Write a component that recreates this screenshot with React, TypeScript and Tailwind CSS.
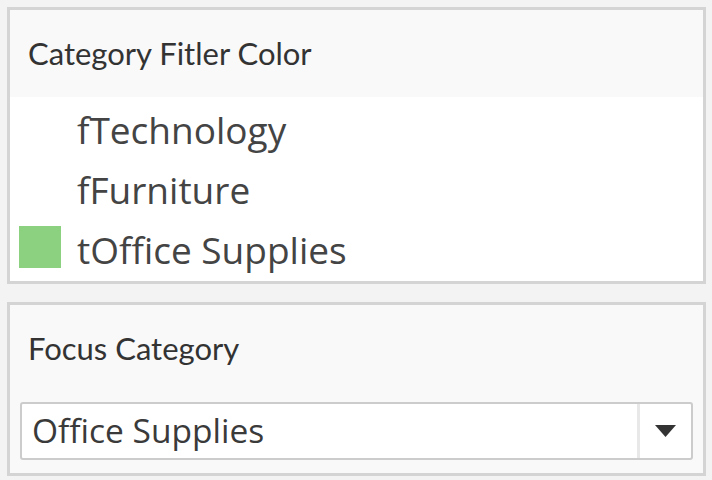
import React from 'react';

const items = [
  { label: 'fTechnology', on: false },
  { label: 'fFurniture', on: false },
  { label: 'tOffice Supplies', on: true },
];

const title = { fontFamily: 'Lato, "Open Sans", sans-serif' };
const body = { fontFamily: '"Open Sans", "Noto Sans", sans-serif' };

const App = () => {
  return (
    <div className="w-[712px] h-[480px] bg-[#f3f3f3] pt-[7px] pl-[7px] text-[#333333]">
      {/* Legend panel */}
      <div className="w-[699px] h-[277px] border-[3px] border-[#d4d4d4] bg-white flex flex-col">
        <div
          className="h-[87px] bg-[#f9f9f9] flex items-center pl-[18px] text-[31px] leading-none"
          style={title}
        >
          Category Fitler Color
        </div>
        <div className="flex flex-col" style={body}>
          {items.map((item) => (
            <div key={item.label} className="h-[60px] flex items-center">
              <div
                className={
                  'w-[42px] h-[42px] ml-[9px] ' + (item.on ? 'bg-[#8bd17f]' : 'bg-transparent')
                }
              />
              <span className="ml-[16px] pt-[4px] text-[37px] leading-none text-[#444444]">
                {item.label}
              </span>
            </div>
          ))}
        </div>
      </div>

      {/* Parameter panel */}
      <div className="mt-[18px] w-[699px] h-[174px] border-[3px] border-[#d4d4d4] bg-[#f9f9f9] flex flex-col">
        <div
          className="h-[97px] flex items-center pl-[18px] pb-[10px] text-[31px] leading-none"
          style={title}
        >
          Focus Category
        </div>
        <div className="ml-[10px] w-[673px] h-[58px] border-2 border-[#cccccc] rounded-[3px] bg-white flex items-center">
          <span className="flex-1 pl-[10px] text-[33.5px] leading-none text-[#3a3a3a]" style={body}>
            Office Supplies
          </span>
          <div className="w-[54px] h-full border-l-[3px] border-[#e8e8e8] flex items-center justify-center">
            <svg width="21" height="12" viewBox="0 0 21 12">
              <polygon points="0,0 21,0 10.5,12" fill="#333333" />
            </svg>
          </div>
        </div>
      </div>
    </div>
  );
};

export default App;
